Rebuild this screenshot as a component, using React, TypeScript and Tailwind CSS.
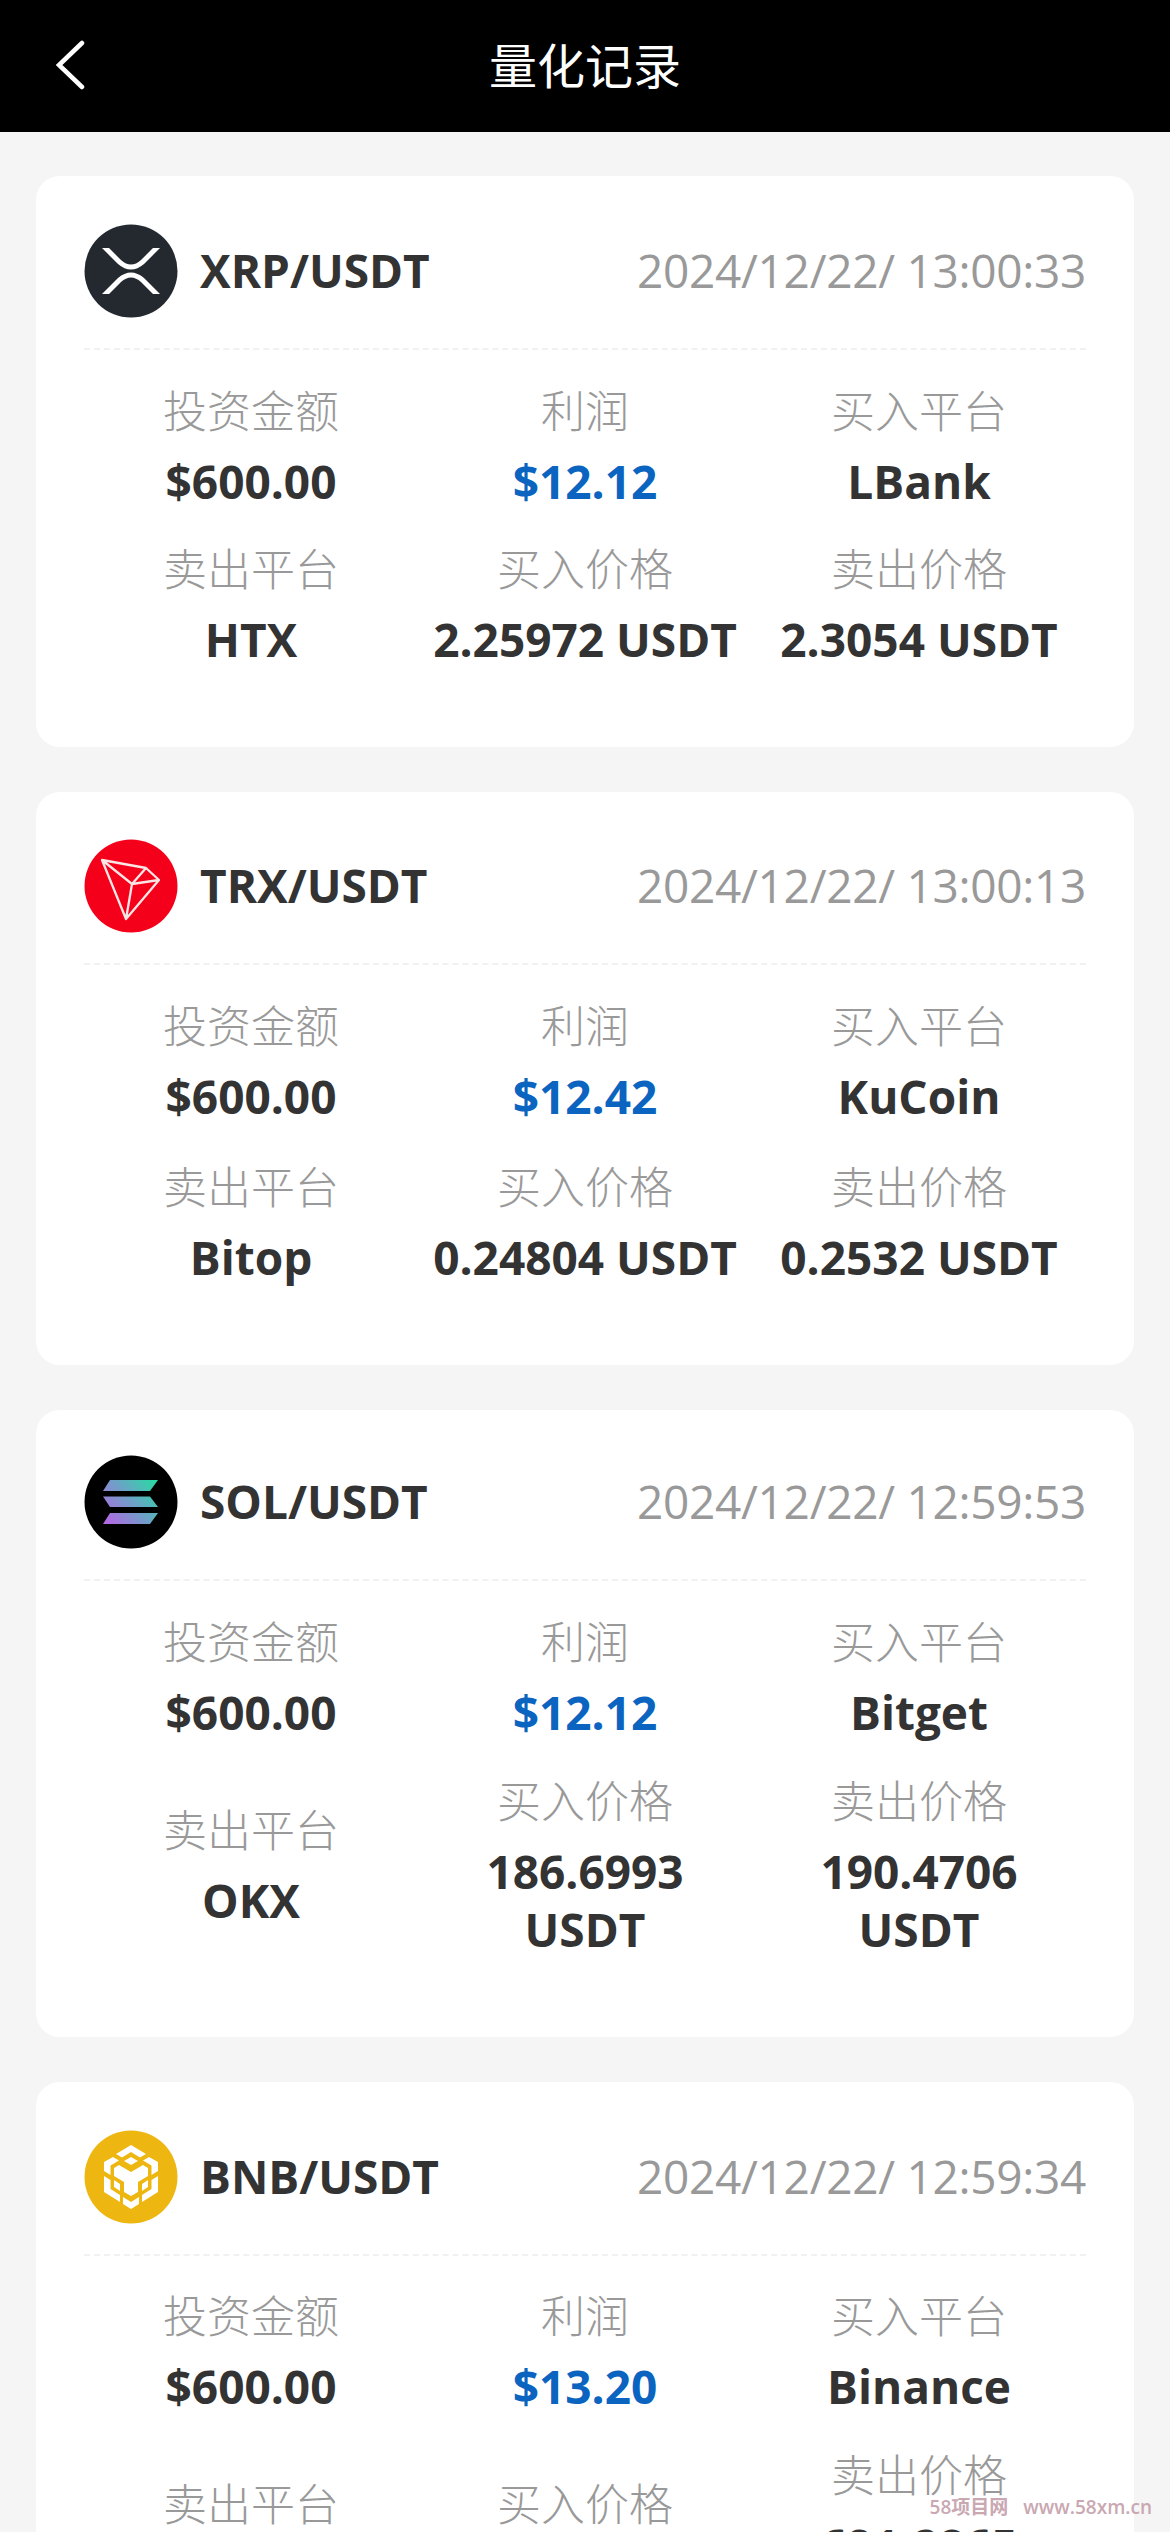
import React from "react";

const FONT = { fontFamily: '"Open Sans", "Noto Sans CJK SC", sans-serif' };

function Xrp() {
  return (
    <svg viewBox="0 0 94 94" className="w-[94px] h-[94px] shrink-0">
      <circle cx="47" cy="47" r="46.5" fill="#23292f" />
      <path d="M18 24 H25 L37 36 Q47 45 57 36 L69 24 H76 L60 40 Q47 51 34 40 Z" fill="#fff" />
      <path d="M18 70 H25 L37 58 Q47 49 57 58 L69 70 H76 L60 54 Q47 43 34 54 Z" fill="#fff" />
    </svg>
  );
}

function Trx() {
  return (
    <svg viewBox="0 0 94 94" className="w-[94px] h-[94px] shrink-0">
      <circle cx="47" cy="47" r="46.5" fill="#f5001a" />
      <path d="M18 21 L62 29 L75 41 L42 80 Z M18 21 L48 45 L75 41 M48 45 L62 29 M48 45 L42 80" fill="none" stroke="#fbe6e6" strokeWidth="2.3" strokeLinejoin="round" />
    </svg>
  );
}

function Sol() {
  return (
    <svg viewBox="0 0 94 94" className="w-[94px] h-[94px] shrink-0">
      <defs>
        <linearGradient id="solg" gradientUnits="userSpaceOnUse" x1="20" y1="70" x2="74" y2="24">
          <stop offset="0" stopColor="#bb62e6" />
          <stop offset="0.5" stopColor="#6f9fc8" />
          <stop offset="1" stopColor="#22e0a0" />
        </linearGradient>
      </defs>
      <circle cx="47" cy="47" r="46.5" fill="#000" />
      <path d="M26 25 H74 L66 36 H19 Z" fill="url(#solg)" />
      <path d="M19 41.5 H66 L74 52 H26 Z" fill="url(#solg)" />
      <path d="M26 58 H74 L66 69 H19 Z" fill="url(#solg)" />
    </svg>
  );
}

function Bnb() {
  return (
    <svg viewBox="0 0 94 94" className="w-[94px] h-[94px] shrink-0">
      <circle cx="47" cy="47" r="46.5" fill="#eeb611" />
      <g fill="#fff">
        <path d="M47 15 L62 24 L56 27.5 L47 22 L38 27.5 L32 24 Z" />
        <path d="M47 27 L54 31 L47 35 L40 31 Z" />
        <path d="M20 32 L29 27 L35 30.5 L26.5 35.5 L26.5 45 L20 41 Z" />
        <path d="M74 32 L65 27 L59 30.5 L67.5 35.5 L67.5 45 L74 41 Z" />
        <path d="M35 35 L47 42 L59 35 L64 38 L64 46 L54 52 L54 62 L47 66 L40 62 L40 52 L30 46 L30 38 Z" />
        <path d="M20 46 L26.5 50 L26.5 59 L36 65 L36 72 L20 62 Z" />
        <path d="M74 46 L67.5 50 L67.5 59 L58 65 L58 72 L74 62 Z" />
        <path d="M30 50 L36 54 L36 61 L30 57 Z" />
        <path d="M64 50 L58 54 L58 61 L64 57 Z" />
        <path d="M39 67 L47 72 L55 67 L55 74 L47 79 L39 74 Z" />
      </g>
    </svg>
  );
}

type Rec = {
  icon: React.ReactNode;
  pair: string;
  time: string;
  profit: string;
  buy: string;
  sell: string;
  buyPrice: string;
  sellPrice: string;
  cardClass: string;
  gridClass: string;
};

const records: Rec[] = [
  { icon: <Xrp />, pair: "XRP/USDT", time: "2024/12/22/ 13:00:33", profit: "$12.12", buy: "LBank", sell: "HTX", buyPrice: "2.25972 USDT", sellPrice: "2.3054 USDT", cardClass: "pt-[48px] pb-[79px]", gridClass: "pt-[32px] gap-y-[30px]" },
  { icon: <Trx />, pair: "TRX/USDT", time: "2024/12/22/ 13:00:13", profit: "$12.42", buy: "KuCoin", sell: "Bitop", buyPrice: "0.24804 USDT", sellPrice: "0.2532 USDT", cardClass: "pt-[47px] pb-[79px]", gridClass: "pt-[32px] gap-y-[33px]" },
  { icon: <Sol />, pair: "SOL/USDT", time: "2024/12/22/ 12:59:53", profit: "$12.12", buy: "Bitget", sell: "OKX", buyPrice: "186.6993 USDT", sellPrice: "190.4706 USDT", cardClass: "pt-[45px] pb-[79px]", gridClass: "pt-[32px] gap-y-[31px]" },
  { icon: <Bnb />, pair: "BNB/USDT", time: "2024/12/22/ 12:59:34", profit: "$13.20", buy: "Binance", sell: "Gate", buyPrice: "678.32 USDT", sellPrice: "691.2865 USDT", cardClass: "pt-[48px] pb-[79px]", gridClass: "pt-[31px] gap-y-[31px]" },
];

function Cell({ label, value, blue }: { label: string; value: string; blue?: boolean }) {
  return (
    <div className="flex flex-col items-center justify-center text-center px-[6px]">
      <div className="text-[44px] leading-[58px] text-[#999999] font-light">{label}</div>
      <div className={`mt-[12px] text-[46px] leading-[58px] font-bold ${blue ? "text-[#0a64c0]" : "text-[#333333]"}`}>
        {value}
      </div>
    </div>
  );
}

function Card({ r }: { r: Rec }) {
  return (
    <div className={`bg-white rounded-[24px] px-[48px] ${r.cardClass}`}>
      <div className="flex items-center justify-between pb-[30px] border-b-2 border-dashed border-[#f1f1f1]">
        <div className="flex items-center gap-[22px]">
          {r.icon}
          <span className="text-[46px] font-bold text-[#333333] pb-[2px]">{r.pair}</span>
        </div>
        <span className="text-[46px] text-[#999999] tracking-[-0.3px] pb-[2px]">{r.time}</span>
      </div>
      <div className={`grid grid-cols-3 ${r.gridClass}`}>
        <Cell label="投资金额" value="$600.00" />
        <Cell label="利润" value={r.profit} blue />
        <Cell label="买入平台" value={r.buy} />
        <Cell label="卖出平台" value={r.sell} />
        <Cell label="买入价格" value={r.buyPrice} />
        <Cell label="卖出价格" value={r.sellPrice} />
      </div>
    </div>
  );
}

export default function App() {
  return (
    <div className="relative w-[1170px] h-[2532px] overflow-hidden bg-[#f5f5f5]" style={FONT}>
      <header className="relative h-[132px] bg-black flex items-center justify-center">
        <svg viewBox="0 0 30 50" className="absolute left-[55px] top-[40px] w-[30px] h-[50px]">
          <path d="M27 3 L4 25 L27 47" fill="none" stroke="#fff" strokeWidth="4.5" strokeLinecap="round" strokeLinejoin="miter" />
        </svg>
        <h1 className="text-[48px] text-white font-normal">量化记录</h1>
      </header>
      <main className="flex flex-col gap-[45px] px-[36px] pt-[44px]">
        {records.map((r) => (
          <Card key={r.pair} r={r} />
        ))}
      </main>
      <div className="absolute right-[18px] top-[2495px] text-[19px] leading-[24px] text-[#c9a8b2] font-semibold whitespace-nowrap">
        58项目网 <span className="ml-[10px]">www.58xm.cn</span>
      </div>
    </div>
  );
}
